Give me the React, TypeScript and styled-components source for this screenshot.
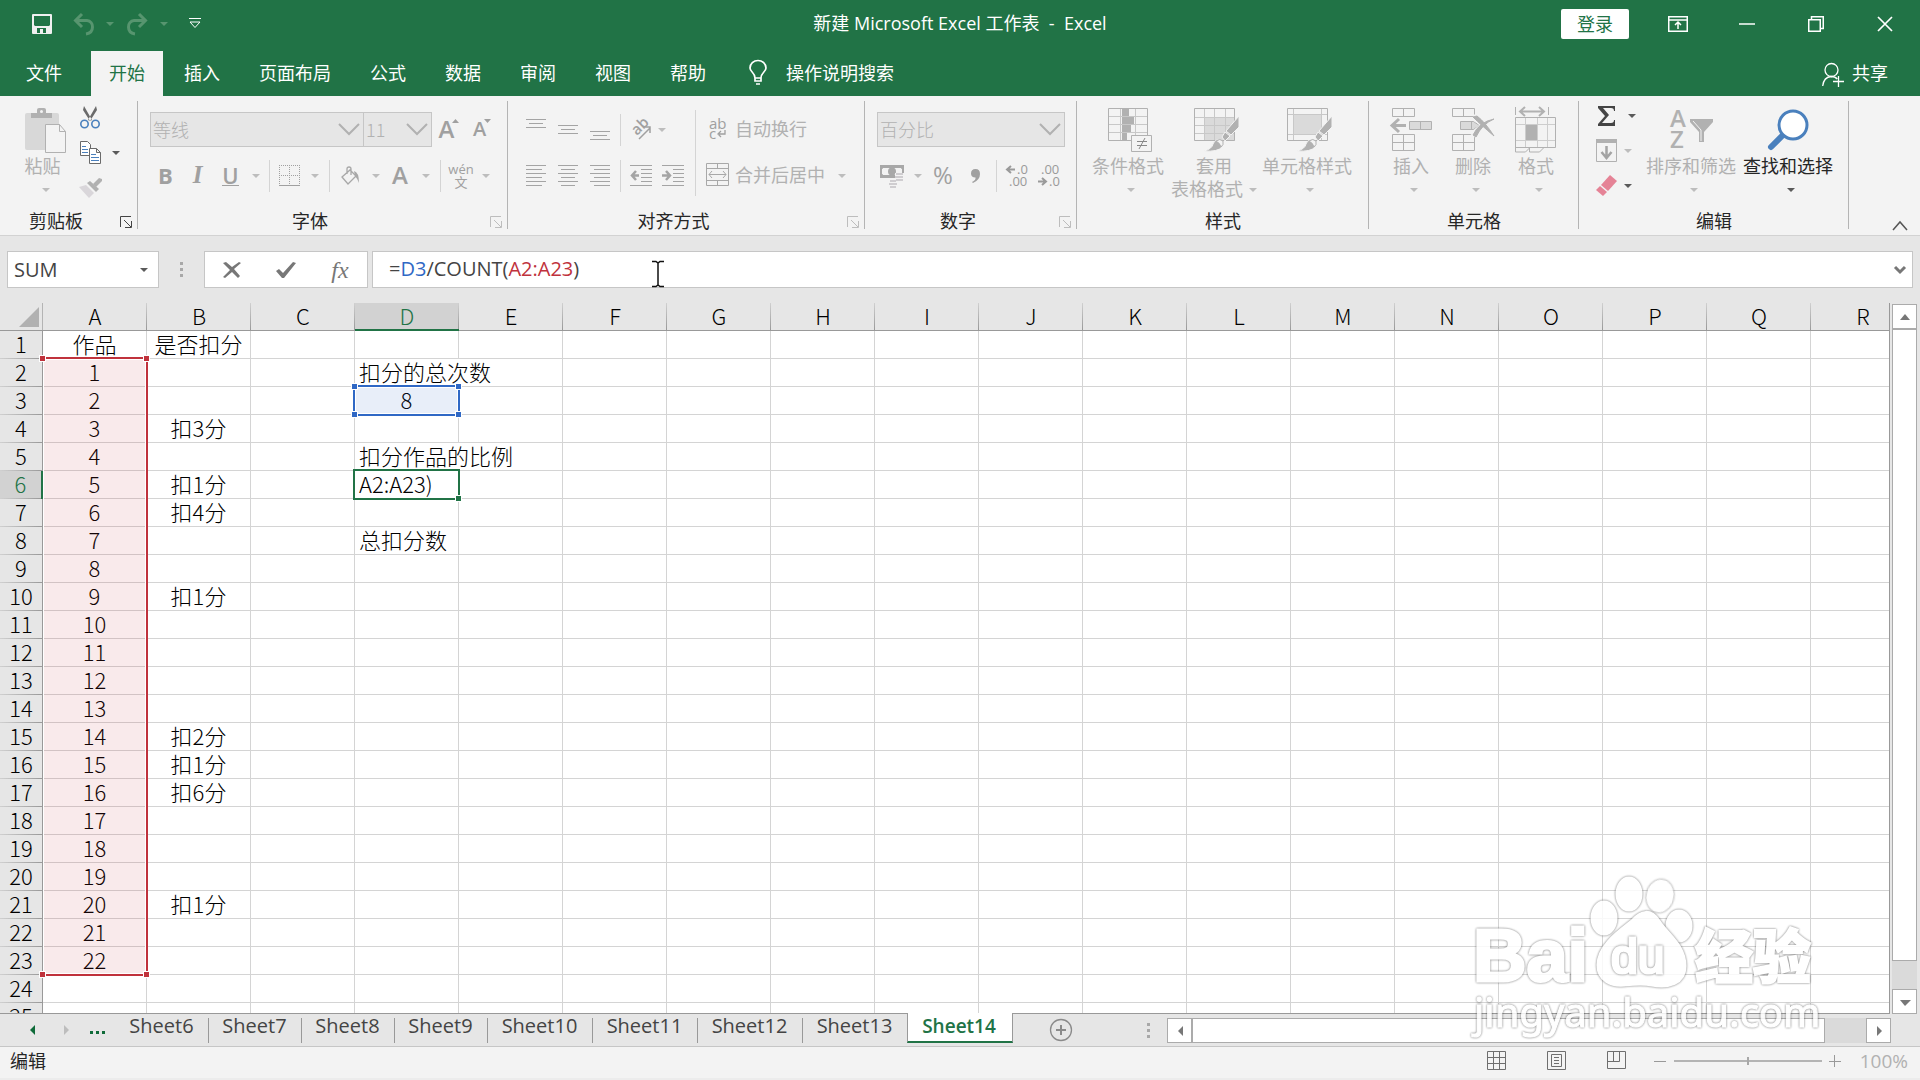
import React from "react";
import styled, { createGlobalStyle, css } from "styled-components";

const GREEN = "#217346";
const OFF = "#b1b1b1";
const UI = `"Open Sans", "Noto Sans CJK SC", sans-serif`;
const SHEET = `"Noto Sans CJK SC", sans-serif`;

const Global = createGlobalStyle`
  *, *::before, *::after { box-sizing: border-box; }
  body { margin: 0; }
  button, input, select {
    font: inherit; color: inherit; margin: 0; padding: 0;
    border: 0; background: none; border-radius: 0;
  }
  svg { display: block; flex: none; overflow: visible; }
`;

const Page = styled.div`
  display: flex;
  flex-direction: column;
  height: 100vh;
  overflow: hidden;
  background: #e6e6e6;
  color: #262626;
  font-family: ${UI};
  font-size: 18px;
  line-height: 24px;
  position: relative;
`;

/* ---------- title bar and tabs ---------- */

const TitleBar = styled.header`
  display: grid;
  grid-template-columns: 1fr auto 1fr;
  align-items: center;
  height: 51px;
  padding-bottom: 4px;
  background: ${GREEN};
  color: #fff;
`;
const QuickAccess = styled.div`
  display: flex;
  align-items: center;
  padding-left: 22px;
`;
const Title = styled.h1`
  margin: 0;
  padding-bottom: 2px;
  font-size: 18px;
  font-weight: 400;
  white-space: pre;
`;
const WindowControls = styled.div`
  display: flex;
  align-items: center;
  justify-content: flex-end;
  padding-right: 1px;
`;
const SignIn = styled.button`
  width: 68px;
  height: 30px;
  margin-right: 14px;
  border-radius: 2px;
  background: #fff;
  color: ${GREEN};
`;
const Slot = styled.button<{ $w: number; $color?: string }>`
  display: flex;
  align-items: center;
  justify-content: center;
  flex: none;
  width: ${(p) => p.$w}px;
  height: 32px;
  color: ${(p) => p.$color ?? "inherit"};
`;
const TabBar = styled.nav`
  display: flex;
  align-items: stretch;
  gap: 3px;
  height: 45px;
  padding: 0 26px 0 8px;
  background: ${GREEN};
  color: #fff;
`;
const Tab = styled.button<{ $active?: boolean; $file?: boolean }>`
  padding: 0 18px 2px;
  white-space: nowrap;
  ${(p) => p.$file && css`margin-right: 8px;`}
  ${(p) => p.$active && css`background: #f3f3f3; color: ${GREEN};`}
`;
const TellMe = styled.button`
  display: flex;
  align-items: center;
  gap: 18px;
  margin-left: 21px;
  padding-bottom: 2px;
`;
const Share = styled(TellMe)`
  gap: 8px;
  margin-left: auto;
  margin-right: 6px;
`;

/* ---------- ribbon ---------- */

const RibbonBar = styled.section`
  display: flex;
  flex: none;
  height: 140px;
  border-bottom: 1px solid #d2d2d2;
  background: #f3f3f3;
`;
const GroupBox = styled.div<{ $w: number }>`
  display: flex;
  flex-direction: column;
  flex: none;
  width: ${(p) => p.$w}px;
  background: linear-gradient(#b4b4b4, #b4b4b4) right 0 top 5px / 1px 128px no-repeat;
`;
const GroupBody = styled.div<{ $pad: number }>`
  display: flex;
  height: 104px;
  padding-left: ${(p) => p.$pad}px;
  color: ${OFF};
`;
const GroupFoot = styled.div`
  display: flex;
  align-items: center;
  height: 35px;
  padding-top: 9px;
`;
const GroupName = styled.span`
  flex: 1;
  padding-bottom: 2px;
  text-align: center;
`;
const Launcher = styled.button<{ $on?: boolean }>`
  width: 26px;
  padding: 0 0 0 8px;
  color: ${(p) => (p.$on ? "#444" : "#bdbdbd")};
`;
const Rows = styled.div`
  display: flex;
  flex-direction: column;
  gap: 11px;
  padding-top: 16px;
`;
const Row = styled.div`
  display: flex;
  align-items: center;
  height: 35px;
`;
const Rule = styled.i<{ $w: number; $tall?: boolean }>`
  flex: none;
  width: ${(p) => p.$w}px;
  height: ${(p) => (p.$tall ? 86 : 32)}px;
  ${(p) => p.$tall && css`margin-top: 14px;`}
  background: linear-gradient(#d4d4d4, #d4d4d4) center / 1px 100% no-repeat;
`;
const Combo = styled.label<{ $w: number }>`
  position: relative;
  display: flex;
  align-items: center;
  width: ${(p) => p.$w}px;
  height: 35px;
  border: 1px solid #c6c6c6;
  background: #e6e6e6;
  & + & { margin-left: -1px; }
  select { appearance: none; width: 100%; height: 33px; padding: 0 0 2px 2px; font-family: ${SHEET}; font-weight: 300; }
  svg { position: absolute; right: 3px; pointer-events: none; }
`;
const Big = styled.button<{ $w: number; $on?: boolean }>`
  display: flex;
  flex-direction: column;
  align-items: center;
  flex: none;
  width: ${(p) => p.$w}px;
  padding-top: 8px;
  line-height: 23px;
  white-space: nowrap;
  color: ${(p) => (p.$on ? "#262626" : OFF)};
`;
const BigIcon = styled.span`
  display: flex;
  align-items: center;
  flex: none;
  height: 51px;
`;
const BigLine = styled.span<{ $pad?: number }>`
  display: flex;
  align-items: center;
  flex: none;
  gap: 6px;
  height: 23px;
  padding-left: ${(p) => p.$pad ?? 0}px;
`;
const SmallStack = styled.div<{ $w: number; $top: number }>`
  display: flex;
  flex-direction: column;
  width: ${(p) => p.$w}px;
  padding-top: ${(p) => p.$top}px;
`;
const Small = styled.button<{ $on?: boolean; $gap?: number }>`
  display: flex;
  align-items: center;
  flex: none;
  gap: ${(p) => p.$gap ?? 7}px;
  height: 35px;
  padding-left: 7px;
  color: ${(p) => (p.$on ? "#5a5a5a" : "#bdbdbd")};
`;
const TextTool = styled.button`
  display: flex;
  align-items: center;
  gap: 5px;
  padding: 0 0 2px 4px;
  white-space: nowrap;
`;
const Glyph = styled.span<{ $size?: number; $kind?: "b" | "i" | "u" | "plain" }>`
  padding-bottom: 2px;
  color: #a0a0a0;
  font-size: ${(p) => p.$size ?? 22}px;
  font-weight: 600;
  ${(p) => p.$kind === "b" && css`font-weight: 700;`}
  ${(p) => p.$kind === "i" && css`font-family: "Liberation Serif", serif; font-style: italic; font-weight: 700;`}
  ${(p) => p.$kind === "u" && css`padding: 0; border-bottom: 1px solid #a0a0a0; line-height: 19px;`}
  ${(p) => p.$kind === "plain" && css`font-weight: 400;`}
`;
const SizeMark = styled.svg`
  align-self: flex-start;
  margin: 5px 0 0 -2px;
`;
const Collapse = styled.button`
  align-self: flex-end;
  margin: 0 12px 4px auto;
`;

/* ---------- formula bar ---------- */

const FormulaBar = styled.section`
  display: flex;
  align-items: flex-start;
  flex: none;
  height: 67px;
  padding: 15px 7px 0;
  color: #444;
  font-size: 20px;
`;
const Field = styled.div`
  display: flex;
  align-items: center;
  height: 37px;
  border: 1px solid #c6c6c6;
  background: #fff;
`;
const NameBox = styled(Field)`
  width: 152px;
  padding: 0 10px 0 6px;
  input { flex: 1; min-width: 0; outline: 0; }
`;
const Grip = styled.i<{ $w: number }>`
  width: ${(p) => p.$w}px;
  height: 15px;
  align-self: center;
  background: radial-gradient(#a8a8a8, #a8a8a8) center / 3px 100% no-repeat;
  mask: repeating-linear-gradient(#000 0 3px, transparent 3px 6px);
`;
const NameGrip = styled(Grip)`
  align-self: flex-start;
  margin-top: 11px;
`;
const FormulaField = styled(Field)`
  flex: 1;
  min-width: 0;
  margin-left: 4px;
  padding: 0 6px 2px 16px;
`;
const FormulaText = styled.div`
  flex: 1;
  outline: 0;
`;
const Ref = styled.span<{ $c: string }>`
  color: ${(p) => p.$c};
`;

/* ---------- sheet ---------- */

const Work = styled.main`
  display: flex;
  flex: 1;
  min-height: 0;
`;
const SheetView = styled.div`
  flex: 1;
  min-width: 0;
  overflow: hidden;
  border-right: 1px solid #999;
  border-bottom: 1px solid #999;
  background: linear-gradient(#e6e6e6 28px, #fff 28px);
`;
const Table = styled.table`
  width: 1915px;
  border-collapse: separate;
  border-spacing: 0;
  table-layout: fixed;
  color: #000;
  font-family: ${SHEET};
  font-size: 22px;
  font-weight: 300;
  line-height: 24px;
  th, td { height: 28px; padding: 0; font-weight: 300; vertical-align: top; white-space: nowrap; }
`;
const Corner = styled.th`
  border-bottom: 1px solid #999;
  background: linear-gradient(#b4b4b4, #b4b4b4) right / 1px 100% no-repeat, #e6e6e6;
  svg { margin: 4px 0 0 19px; }
`;
const ColHead = styled.th<{ $on: boolean }>`
  border-bottom: ${(p) => (p.$on ? `2px solid ${GREEN}` : "1px solid #999")};
  background: linear-gradient(#d0d0d0, #999) right / 1px 100% no-repeat, ${(p) => (p.$on ? "#d2d2d2" : "#e6e6e6")};
  color: ${(p) => (p.$on ? GREEN : "#000")};
`;
const RowHead = styled.th<{ $on: boolean }>`
  border-right: ${(p) => (p.$on ? `2px solid ${GREEN}` : "1px solid #999")};
  background: linear-gradient(90deg, #d0d0d0, #999) bottom / 100% 1px no-repeat, ${(p) => (p.$on ? "#d2d2d2" : "#e6e6e6")};
  color: ${(p) => (p.$on ? GREEN : "#000")};
`;
const Cell = styled.td<{ $left?: boolean; $spill?: boolean }>`
  position: relative;
  border-right: 1px solid ${(p) => (p.$spill ? "transparent" : "#d4d4d4")};
  border-bottom: 1px solid #d4d4d4;
  text-align: ${(p) => (p.$left ? "left" : "center")};
  && { padding-left: ${(p) => (p.$left ? 4 : 0)}px; }
`;
const RangeBox = styled.i<{ $c: string; $rows: number; $fill: string; $open?: boolean; $solid?: boolean }>`
  position: absolute;
  z-index: 1;
  top: -2px;
  left: -2px;
  width: 107px;
  height: ${(p) => p.$rows * 28 + 3}px;
  border: 2px solid ${(p) => p.$c};
  background: ${(p) => p.$fill};
  pointer-events: none;
  ${(p) => !p.$solid && css`box-shadow: inset 0 0 0 1px #fff;`}
  ${(p) => p.$open && css`left: 0; width: 105px; border-left: 0;`}
`;
const Knob = styled.b<{ $c: string; $v: "top" | "bottom"; $h: "left" | "right" }>`
  position: absolute;
  ${(p) => p.$v}: -4px;
  ${(p) => p.$h}: -4px;
  width: 7px;
  height: 7px;
  border: 1px solid #fff;
  background: ${(p) => p.$c};
`;

const VScroll = styled.div`
  display: flex;
  flex-direction: column;
  flex: none;
  width: 25px;
  margin: 1px 3px 0 2px;
  background: #dadada;
`;
const ScrollButton = styled.button`
  display: flex;
  align-items: center;
  justify-content: center;
  flex: none;
  width: 25px;
  height: 25px;
  border: 1px solid #ababab;
  background: #fff;
  color: #777;
`;
const Thumb = styled.div<{ $grow: number }>`
  flex: ${(p) => p.$grow} 1 0;
  border: 1px solid #ababab;
  background: #fff;
`;
const Track = styled.div<{ $grow: number }>`
  flex: ${(p) => p.$grow} 1 0;
`;

/* ---------- sheet tabs and status bar ---------- */

const SheetBar = styled.nav`
  display: flex;
  flex: none;
  height: 33px;
  border-bottom: 1px solid #c6c6c6;
  padding-right: 29px;
`;
const SheetNav = styled.div`
  display: flex;
  align-items: center;
  width: 116px;
  padding-left: 16px;
  color: #0f6b39;
`;
const SheetTab = styled.button<{ $w: number; $active?: boolean }>`
  flex: none;
  width: ${(p) => p.$w}px;
  height: 29px;
  padding: 0 2px 5px 0;
  color: #444;
  font-size: 20px;
  background: linear-gradient(#999, #999) right 0 top 4px / 1px 25px no-repeat;
  ${(p) =>
    p.$active &&
    css`
      margin-left: -1px;
      margin-top: -1px;
      padding-bottom: 2px;
      height: 30px;
      border: solid #999;
      border-width: 0 1px;
      border-bottom: 2px solid ${GREEN};
      background: #fff;
      color: ${GREEN};
      font-weight: 600;
      font-size: 19px;
    `}
`;
const AddSheet = styled.button`
  margin-left: 36px;
`;
const HScroll = styled.div`
  display: flex;
  flex: 1;
  height: 25px;
  margin-top: 4px;
  background: #dadada;
`;
const Spacer = styled.div`
  width: 56px;
`;
const Status = styled.footer`
  display: flex;
  align-items: center;
  flex: none;
  height: 33px;
  padding: 0 12px 4px 10px;
  border-bottom: 2px solid #ececec;
  background: #f3f3f3;
`;
const Views = styled.div`
  display: flex;
  margin-left: auto;
  color: #6e6e6e;
`;
const Zoom = styled.input`
  appearance: none;
  width: 148px;
  height: 10px;
  background: linear-gradient(#b4b4b4, #b4b4b4) center / 100% 2px no-repeat;
  &::-webkit-slider-thumb {
    appearance: none;
    width: 2px;
    height: 8px;
    background: #a8a8a8;
  }
`;
const Percent = styled.span`
  width: 60px;
  text-align: right;
  color: ${OFF};
  font-size: 19px;
`;
const Beam = styled.div`
  position: absolute;
  left: 650px;
  top: 260px;
`;
const Watermark = styled.div`
  position: absolute;
  right: 80px;
  bottom: 34px;
  pointer-events: none;
  opacity: 0.85;
  svg > * { filter: drop-shadow(0 0 1px rgba(0, 0, 0, 0.4)) drop-shadow(0 0 1px rgba(0, 0, 0, 0.25)); }
`;

/* ---------- drawings ---------- */

const Arrow = ({ on }: { on?: boolean }) => (
  <svg width="8" height="4" viewBox="0 0 8 4"><path d="M0 0h8L4 4z" fill={on ? "#5a5a5a" : "#bdbdbd"} /></svg>
);
const Chevron = () => (
  <svg width="22" height="13" viewBox="0 0 22 13" fill="none" stroke={OFF} strokeWidth="2"><path d="M1 1l10 10L21 1" /></svg>
);
const Tri = ({ d }: { d: string }) => (
  <svg width="12" height="12" viewBox="0 0 12 12"><path d={d} fill="currentColor" /></svg>
);
const SaveIcon = () => (
  <svg width="20" height="20" viewBox="0 0 20 20"><path fillRule="evenodd" fill="#f0f0f0" d="M1 0h18a1 1 0 0 1 1 1v18a1 1 0 0 1-1 1H1a1 1 0 0 1-1-1V1a1 1 0 0 1 1-1zm1 2v9l1 1h14l1-1V2zM5 14v5h3v-4h3v4h3v-5z" /></svg>
);
const UndoIcon = ({ flip }: { flip?: boolean }) => (
  <svg width="22" height="22" viewBox="0 0 22 22" fill="none" stroke="#57956f" strokeWidth="3">
    <path transform={flip ? "matrix(-1 0 0 1 22 0)" : undefined} d="M9 1L2.500 7.500 9 14M2.500 7.500H14a6 6 0 0 1 5.500 6.500q0 6-6.500 7" />
  </svg>
);
const LauncherIcon = () => (
  <svg width="12" height="12" viewBox="0 0 12 12" fill="none" stroke="currentColor"><path d="M.5 11V.500H11M4 4l7 7M11.500 5v6.500H5" /></svg>
);
const PasteIcon = () => (
  <svg width="48" height="46" viewBox="-6 0 48 46">
    <rect x="0" y="6" width="34" height="37" rx="2" fill="#d8d8d8" />
    <path d="M6 6h6V3q0-2 2-2h5q2 0 2 2v3h6v5H6z" fill="#b1b1b1" /><circle cx="16.500" cy="4.500" r="1.500" fill="#f3f3f3" />
    <path d="M20.500 17.500h14l6 7v21h-20z" fill="#f3f3f3" stroke="#b1b1b1" /><path d="M34.500 17.500v7h6" fill="none" stroke="#b1b1b1" />
  </svg>
);
const CutIcon = () => (
  <svg width="20" height="23" viewBox="0 0 20 23" fill="none">
    <path d="M4 0l8 14-2 1L3 4zM16 0L8 14l2 1 7-11z" fill="#6a6a6a" />
    <circle cx="4.500" cy="18" r="3.700" stroke="#4a80bd" strokeWidth="1.600" /><circle cx="15.500" cy="18" r="3.700" stroke="#4a80bd" strokeWidth="1.600" />
  </svg>
);
const CopyIcon = () => (
  <svg width="21" height="23" viewBox="0 0 21 23" fill="#fff" stroke="#6a6a6a">
    <path d="M.500.500h7l3 3v11h-10z" /><path d="M2 5.500h4M2 8.500h6M2 11.500h6" stroke="#4a80bd" />
    <path d="M9.500 7.500h7l4 4v11h-11zM16.500 7.500v4h4" /><path d="M11 13.500h5M11 16.500h8M11 19.500h8" stroke="#4a80bd" />
  </svg>
);
const PainterIcon = () => (
  <svg width="21" height="20" viewBox="1 0 21 20">
    <path d="M0 9l7-2 8 8-5 5z" fill="#d9d6da" /><path d="M8 5l3-2 9 8-3 3z" fill="#b1b1b1" /><path d="M14 6l6-6 3 1v2l-6 6z" fill="#b1b1b1" />
  </svg>
);
const BordersIcon = () => (
  <svg width="21" height="22" viewBox="0 0 21 22" fill="none" stroke="#a0a0a0">
    <path strokeDasharray="1 1" d="M0 .500h21M.500 0v19M20.500 0v19M10.500 0v19M0 10.500h21" /><path d="M0 20.500h21" />
  </svg>
);
const BucketIcon = () => (
  <svg width="19" height="20" viewBox="0 0 19 20" fill="none" stroke="#a8a8a8" strokeWidth="1.300">
    <path d="M1 11l8-7 6 6-8 8zM6 8V3q0-2 2-2t2 2v6" /><path d="M13 5q5 1 5 12-2-5-4-7z" fill="#a8a8a8" stroke="none" />
  </svg>
);
const LinesIcon = ({ rows }: { rows: [number, number, number][] }) => (
  <svg width="22" height="22" viewBox="0 0 22 22" stroke="#a4a4a4">
    {rows.map(([x, y, w]) => <path key={y} d={`M${x} ${y}.500h${w}`} />)}
  </svg>
);
const IndentIcon = ({ out }: { out?: boolean }) => (
  <svg width="22" height="22" viewBox="0 0 22 22" stroke="#a4a4a4" fill="none">
    <path d="M0 .500h22M11 4.500h11M11 8.500h11M11 12.500h11M11 16.500h11M0 20.500h22" />
    <path strokeWidth="2.500" d={out ? "M9 10.500H2M6 6l-4 4.500L6 15" : "M0 10.500h7M4 6l4 4.500L4 15"} />
  </svg>
);
const MiniText = styled.span`
  display: grid;
  font-size: 13px;
  line-height: 13px;
  color: #a0a0a0;
  text-align: center;
`;
const WrapIcon = () => (
  <svg width="24" height="24" viewBox="0 0 24 24" fill="#a0a0a0" fontFamily="Open Sans" fontSize="15">
    <text x="3" y="12">ab</text><text x="3" y="22">c</text>
    <path d="M19 13v4h-6M15 14l-3 3 3 3" fill="none" stroke="#a0a0a0" strokeWidth="1.300" />
  </svg>
);
const AngleIcon = () => (
  <svg width="24" height="24" viewBox="0 0 24 24" fill="#a0a0a0" fontFamily="Open Sans" fontSize="15" fontWeight="600">
    <text transform="translate(8 18) rotate(-45)">ab</text>
    <path d="M10 21L21 10M15 9h6v6" fill="none" stroke="#a0a0a0" strokeWidth="1.500" />
  </svg>
);
const MergeIcon = () => (
  <svg width="24" height="24" viewBox="0 0 24 24" fill="none" stroke="#a8a8a8">
    <path d="M.500.500h22v22H.500zM.500 5.500h22M.500 17.500h22M11.500.500v5M11.500 17.500v5M3 11.500h17M6 8l-3 3.500L6 15M17 8l3 3.500L17 15" />
  </svg>
);
const MoneyIcon = () => (
  <svg width="24" height="24" viewBox="0 0 24 24">
    <path fillRule="evenodd" fill="#a8a8a8" d="M0 1h24v13H0zm3 3q0 1-1 1v5q1 0 1 1h18q0-1 1-1V5q-1 0-1-1z" /><circle cx="12" cy="7.500" r="4" fill="#a8a8a8" />
    <path d="M15 9h9v10h-6v5H8v-8h7z" fill="#f3f3f3" />
    <path d="M16 10h7M15 13h8M16 16h7M10 17h6M9 20h8M10 23h6" stroke="#cfcdd0" strokeWidth="2" />
  </svg>
);
const DecimalIcon = ({ less }: { less?: boolean }) => (
  <svg width="22" height="23" viewBox="0 0 22 23" fill="#9a9a9a" fontFamily="Open Sans" fontSize="13">
    {less ? <><text x="3" y="10">.00</text><text x="11" y="22">.0</text></> : <><text x="11" y="10">.0</text><text x="3" y="22">.00</text></>}
    <path d={less ? "M0 17.500h7M4 14l4 3.500L4 21" : "M9 5.500H2M5 2L1 5.500 5 9"} fill="none" stroke="#9a9a9a" strokeWidth="2" />
  </svg>
);
const CondIcon = () => (
  <svg width="48" height="44" viewBox="-4 0 48 44" fill="none" stroke="#b1b1b1">
    <path d="M14 1h7v8h-7zM14 9h12v8H14zM14 17h9v8h-9zM14 25h5v8h-5z" fill="#b1b1b1" stroke="none" />
    <path d="M1 8.500h38M1 16.500h38M1 24.500h38M12.500 1v32M27.500 1v32" stroke="#c8c8c8" /><path d="M.500.500h39v32H.500z" />
    <path d="M23.500 27.500h20v16h-20z" fill="#f3f3f3" /><path d="M29 33.500h10M29 37.500h10M37 30l-6 11" stroke="#888" />
  </svg>
);
const Brush = () => (
  <g>
    <path d="M45 8L32 23l5 4 8-8z" fill="#b1b1b1" stroke="#f3f3f3" /><path d="M31 24l5 4-5 5-3-4z" fill="#b1b1b1" stroke="#f3f3f3" />
    <path d="M10 43q8-2 9-7 2-5 7-4 5 3 2 7-4 5-18 4z" fill="#b1b1b1" stroke="#f3f3f3" /><path d="M22 33q4-3 7 0 1 4-2 6-1-4-5-6z" fill="#f3f3f3" stroke="#b1b1b1" />
  </g>
);
const TableStyleIcon = () => (
  <svg width="49" height="42" viewBox="-4 1 49 42" fill="none">
    <path d="M11 10h30v23H11z" fill="#dadada" /><path d="M1 9.500h40M1 17.500h40M1 25.500h40M10.500 1v32M20.500 1v32M31.500 1v32" stroke="#c8c8c8" />
    <path d="M.500.500h40v32H.500z" stroke="#b1b1b1" /><Brush />
  </svg>
);
const CellStyleIcon = () => (
  <svg width="49" height="44" viewBox="-4 0 49 44" fill="none">
    <path d="M7 7h28v19H7z" fill="#dadada" /><path d="M1 6.500h40M1 26.500h40M6.500 1v32M34.500 1v32" stroke="#c8c8c8" />
    <path d="M.500.500h40v32H.500z" stroke="#b1b1b1" /><Brush />
  </svg>
);
const InsertIcon = () => (
  <svg width="44" height="44" viewBox="0 0 44 44" fill="none" stroke="#b1b1b1">
    <path d="M3.500.500h22v8h-22zM14.500.500v8M3.500 26.500h22v16h-22zM14.500 26.500v16M3.500 34.500h22" />
    <path d="M20.500 13.500h22v8h-22zM31.500 13.500v8" fill="#dadada" /><path d="M17 17.500H3M10 11l-7 6.500L10 24" strokeWidth="3" />
  </svg>
);
const DeleteIcon = () => (
  <svg width="44" height="44" viewBox="0 0 44 44" fill="none" stroke="#b1b1b1">
    <path d="M1.500.500h22v8h-22zM12.500.500v8M1.500 26.500h22v16h-22zM12.500 26.500v16M1.500 34.500h22" />
    <path d="M9.500 13.500h13l6 4-6 4h-13zM20.500 13.500v8" fill="#dadada" />
    <path d="M22 9q10 5 21 20M43 11Q30 17 22 28" strokeWidth="6" stroke="#f3f3f3" /><path d="M22 9l4-1q8 6 17 20-13-11-21-19zM43 11Q31 16 25 29l-3-2Q28 14 43 11z" fill="#b1b1b1" />
  </svg>
);
const FormatIcon = () => (
  <svg width="42" height="46" viewBox="0 0 42 46" fill="none" stroke="#b1b1b1">
    <path d="M.500 0v8M33.500 0v8" /><path d="M5 4.500h24M10 0L5 4.500 10 9M24 0l5 4.500L24 9" strokeWidth="2" />
    <path d="M10 18h12v15H10z" fill="#b1b1b1" stroke="none" /><path d="M1 17.500h40M1 33.500h40M10.500 11v29M22.500 11v29M32.500 11v29" stroke="#cdcdcd" />
    <path d="M.500 10.500h40v30H.500zM.500 40v5h10l4-4v4h10l4-4" />
  </svg>
);
const FillIcon = () => (
  <svg width="21" height="23" viewBox="0 0 21 23" fill="none" stroke="#b1b1b1">
    <path d="M.500.500h20v22H.500z" /><path d="M0 2h21" strokeWidth="4" /><path d="M10.500 7v10M5.500 13l5 6 5-6" stroke="#a4a4a4" strokeWidth="2.500" />
  </svg>
);
const SumIcon = () => (
  <svg width="20" height="20" viewBox="0 0 20 20"><path fill="#444" d="M2 0h17v5h-1q0-3-3-3H7l6 7-7 8h9q3 0 3-3h1v6H2v-2l7-8-7-8z" /></svg>
);
const EraserIcon = () => (
  <svg width="21" height="21" viewBox="0 0 21 21" fill="#e58396"><path d="M14 0l7 6-9 10-7-6z" /><path d="M4 11l7 6-4 4-7-6z" /></svg>
);
const SortIcon = () => (
  <svg width="44" height="44" viewBox="0 0 44 44" fill="#b1b1b1" fontFamily="Open Sans" fontSize="24" fontWeight="600">
    <text x="1" y="19">A</text><text x="1" y="40">Z</text><path d="M21 11h23v3l-9 10v10h-5V24l-9-10z" />
    <path d="M24 13l8 9v11" stroke="#f3f3f3" fill="none" />
  </svg>
);
const FindIcon = () => (
  <svg width="40" height="42" viewBox="0 0 40 42"><path d="M3 38l14-14" stroke="#4a80bd" strokeWidth="6" strokeLinecap="round" /><circle cx="25" cy="16" r="14" fill="#fff" stroke="#4a80bd" strokeWidth="3" /></svg>
);
const FxGlyph = styled.span`
  color: #777;
  font-family: "Liberation Serif", serif;
  font-size: 24px;
  font-style: italic;
`;

function Group({ name, w, pad, launcher, children }: { name: string; w: number; pad: number; launcher?: "on" | "off"; children: React.ReactNode }) {
  return (
    <GroupBox $w={w} role="group" aria-label={name}>
      <GroupBody $pad={pad}>{children}</GroupBody>
      <GroupFoot>
        <GroupName>{name}</GroupName>
        {launcher && <Launcher $on={launcher === "on"} aria-label={name + "设置"}><LauncherIcon /></Launcher>}
      </GroupFoot>
    </GroupBox>
  );
}

function BigTool({ w, on, icon, label, second }: { w: number; on?: boolean; icon: React.ReactNode; label: string; second?: string }) {
  return (
    <Big $w={w} $on={on}>
      <BigIcon>{icon}</BigIcon>
      <BigLine>{label}</BigLine>
      <BigLine $pad={second ? 0 : 6}>{second}<Arrow on={on} /></BigLine>
    </Big>
  );
}

const topRows: [number, number, number][][] = [
  [[1, 0, 20], [4, 4, 14], [1, 8, 20]],
  [[1, 6, 20], [4, 10, 14], [1, 14, 20]],
  [[1, 12, 20], [4, 16, 14], [1, 20, 20]],
];
const paraRows: [number, number, number][][] = [
  [[1, 0, 20], [1, 4, 16], [1, 8, 20], [1, 12, 16], [1, 16, 20], [1, 20, 16]],
  [[1, 0, 20], [4, 4, 14], [1, 8, 20], [4, 12, 14], [1, 16, 20], [4, 20, 14]],
  [[1, 0, 20], [5, 4, 16], [1, 8, 20], [5, 12, 16], [1, 16, 20], [5, 20, 16]],
];

function Ribbon() {
  return (
    <RibbonBar>
      <Group name="剪贴板" w={138} pad={12} launcher="on">
        <BigTool w={61} icon={<PasteIcon />} label="粘贴" />
        <SmallStack $w={58} $top={4}>
          <Small $on aria-label="剪切"><CutIcon /></Small>
          <Small $on $gap={11} aria-label="复制"><CopyIcon /><Arrow on /></Small>
          <Small aria-label="格式刷"><PainterIcon /></Small>
        </SmallStack>
      </Group>

      <Group name="字体" w={370} pad={12} launcher="off">
        <Rows>
          <Row>
            <Combo $w={214}><select aria-label="字体"><option>等线</option></select><Chevron /></Combo>
            <Combo $w={69}><select aria-label="字号"><option>11</option></select><Chevron /></Combo>
            <Slot $w={34} aria-label="增大字号"><Glyph $size={24}>A</Glyph><SizeMark width="7" height="4"><path d="M0 4l3.500-4L7 4z" fill="#a0a0a0" /></SizeMark></Slot>
            <Slot $w={32} aria-label="减小字号"><Glyph $size={20}>A</Glyph><SizeMark width="7" height="4"><path d="M0 0h7L3.500 4z" fill="#a0a0a0" /></SizeMark></Slot>
          </Row>
          <Row>
            <Slot $w={31} aria-label="加粗"><Glyph $kind="b">B</Glyph></Slot>
            <Slot $w={33} aria-label="倾斜"><Glyph $kind="i" $size={25}>I</Glyph></Slot>
            <Slot $w={33} aria-label="下划线"><Glyph $kind="u">U</Glyph></Slot>
            <Slot $w={18} aria-label="下划线选项"><Arrow /></Slot>
            <Rule $w={9} />
            <Slot $w={30} aria-label="边框"><BordersIcon /></Slot>
            <Slot $w={22} aria-label="边框选项"><Arrow /></Slot>
            <Rule $w={7} />
            <Slot $w={34} aria-label="填充颜色"><BucketIcon /></Slot>
            <Slot $w={17} aria-label="填充颜色选项"><Arrow /></Slot>
            <Slot $w={32} aria-label="字体颜色"><Glyph $size={24}>A</Glyph></Slot>
            <Slot $w={20} aria-label="字体颜色选项"><Arrow /></Slot>
            <Rule $w={8} />
            <Slot $w={34} aria-label="拼音"><MiniText><span>wén</span><span>文</span></MiniText></Slot>
            <Slot $w={16} aria-label="拼音选项"><Arrow /></Slot>
          </Row>
        </Rows>
      </Group>

      <Group name="对齐方式" w={357} pad={12} launcher="off">
        <Rows>
          <Row>
            {topRows.map((r, i) => <Slot key={i} $w={32} aria-label={["顶端对齐", "垂直居中", "底端对齐"][i]}><LinesIcon rows={r} /></Slot>)}
            <Rule $w={9} />
            <Slot $w={32} aria-label="方向"><AngleIcon /></Slot>
            <Slot $w={10} aria-label="方向选项"><Arrow /></Slot>
          </Row>
          <Row>
            {paraRows.map((r, i) => <Slot key={i} $w={32} aria-label={["左对齐", "居中", "右对齐"][i]}><LinesIcon rows={r} /></Slot>)}
            <Rule $w={9} />
            <Slot $w={32} aria-label="减少缩进量"><IndentIcon out /></Slot>
            <Slot $w={32} aria-label="增加缩进量"><IndentIcon /></Slot>
          </Row>
        </Rows>
        <Rule $w={13} $tall />
        <Rows>
          <Row><TextTool><WrapIcon />自动换行</TextTool></Row>
          <Row><TextTool><MergeIcon />合并后居中</TextTool><Slot $w={34} aria-label="合并选项"><Arrow /></Slot></Row>
        </Rows>
      </Group>

      <Group name="数字" w={212} pad={12} launcher="off">
        <Rows>
          <Row><Combo $w={188}><select aria-label="数字格式"><option>百分比</option></select><Chevron /></Combo></Row>
          <Row>
            <Slot $w={30} aria-label="会计格式"><MoneyIcon /></Slot>
            <Slot $w={22} aria-label="会计格式选项"><Arrow /></Slot>
            <Slot $w={28} aria-label="百分比样式"><Glyph $size={24} $kind="plain">%</Glyph></Slot>
            <Slot $w={36} aria-label="千位分隔样式"><svg width="9" height="14" viewBox="0 0 9 14"><path d="M4.500 0Q9 0 9 5q0 6-7 9l-1-1q4-2 3.500-4.500Q0 8.500 0 4.500 0 0 4.500 0z" fill="#a0a0a0" /></svg></Slot>
            <Rule $w={6} />
            <Slot $w={36} aria-label="增加小数位数"><DecimalIcon /></Slot>
            <Slot $w={28} aria-label="减少小数位数"><DecimalIcon less /></Slot>
          </Row>
        </Rows>
      </Group>

      <Group name="样式" w={292} pad={8}>
        <BigTool w={86} icon={<CondIcon />} label="条件格式" />
        <BigTool w={86} icon={<TableStyleIcon />} label="套用" second="表格格式" />
        <BigTool w={100} icon={<CellStyleIcon />} label="单元格样式" />
      </Group>

      <Group name="单元格" w={210} pad={11}>
        <BigTool w={62} icon={<InsertIcon />} label="插入" />
        <BigTool w={62} icon={<DeleteIcon />} label="删除" />
        <BigTool w={64} icon={<FormatIcon />} label="格式" />
      </Group>

      <Group name="编辑" w={270} pad={10}>
        <SmallStack $w={56} $top={2}>
          <Small $on $gap={12} aria-label="求和"><SumIcon /><Arrow on /></Small>
          <Small aria-label="填充"><FillIcon /><Arrow /></Small>
          <Small $on aria-label="清除"><EraserIcon /><Arrow on /></Small>
        </SmallStack>
        <BigTool w={92} icon={<SortIcon />} label="排序和筛选" />
        <BigTool w={102} on icon={<FindIcon />} label="查找和选择" />
      </Group>
      <Collapse aria-label="折叠功能区"><svg width="16" height="10" viewBox="0 0 16 10" fill="none" stroke="#555" strokeWidth="1.500"><path d="M1 9l7-8 7 8" /></svg></Collapse>
    </RibbonBar>
  );
}

const columns = "ABCDEFGHIJKLMNOPQR".split("");
const deductions: Record<number, string> = { 1: "是否扣分", 4: "扣3分", 6: "扣1分", 7: "扣4分", 10: "扣1分", 15: "扣2分", 16: "扣1分", 17: "扣6分", 21: "扣1分" };
const notes: Record<number, string> = { 2: "扣分的总次数", 3: "8", 5: "扣分作品的比例", 6: "A2:A23)", 8: "总扣分数" };

function cellText(col: string, row: number) {
  if (col === "A") return row === 1 ? "作品" : row <= 23 ? String(row - 1) : "";
  if (col === "B") return deductions[row] ?? "";
  if (col === "D") return notes[row] ?? "";
  return "";
}

function Sheet() {
  return (
    <SheetView>
      <Table>
        <colgroup><col style={{ width: 43 }} />{columns.map((c) => <col key={c} />)}</colgroup>
        <thead>
          <tr>
            <Corner aria-label="全选"><svg width="20" height="20" viewBox="0 0 20 20"><path d="M20 0v20H0z" fill="#b1b1b1" /></svg></Corner>
            {columns.map((c) => <ColHead key={c} $on={c === "D"} scope="col">{c}</ColHead>)}
          </tr>
        </thead>
        <tbody>
          {Array.from({ length: 25 }, (_, i) => i + 1).map((r) => (
            <tr key={r}>
              <RowHead $on={r === 6} scope="row">{r}</RowHead>
              {columns.map((c) => (
                <Cell key={c} $left={c === "D" && r !== 3} $spill={c === "D" && (r === 2 || r === 5)}>
                  {c === "A" && r === 2 && (
                    <RangeBox $c="#c0323c" $rows={22} $fill="rgba(192,50,60,.1)" $open>
                      <Knob $c="#c0323c" $v="top" $h="left" /><Knob $c="#c0323c" $v="top" $h="right" />
                      <Knob $c="#c0323c" $v="bottom" $h="left" /><Knob $c="#c0323c" $v="bottom" $h="right" />
                    </RangeBox>
                  )}
                  {c === "D" && r === 3 && (
                    <RangeBox $c="#2f68c5" $rows={1} $fill="rgba(47,104,197,.11)">
                      <Knob $c="#2f68c5" $v="top" $h="left" /><Knob $c="#2f68c5" $v="top" $h="right" />
                      <Knob $c="#2f68c5" $v="bottom" $h="left" /><Knob $c="#2f68c5" $v="bottom" $h="right" />
                    </RangeBox>
                  )}
                  {c === "D" && r === 6 && <RangeBox $c={GREEN} $rows={1} $fill="transparent" $solid><Knob $c={GREEN} $v="bottom" $h="right" /></RangeBox>}
                  {cellText(c, r)}
                </Cell>
              ))}
            </tr>
          ))}
        </tbody>
      </Table>
    </SheetView>
  );
}

const up = "M1 9l5-6 5 6z", down = "M1 4h11L6 10z", left = "M9 1v10L4 6z", right = "M4 1v10l5-5z";
const paw = "M44 57C30 68 10 82 10 101c0 16 14 21 26 20 10-1 18-2 28 0 16 3 33-1 33-19 0-21-17-31-26-45C63 45 53 46 44 57z";

export default function App() {
  return (
    <Page>
      <Global />
      <TitleBar>
        <QuickAccess>
          <Slot $w={40} aria-label="保存"><SaveIcon /></Slot>
          <Slot $w={44} aria-label="撤消"><UndoIcon /></Slot>
          <Slot $w={8} aria-label="撤消选项"><svg width="8" height="4"><path d="M0 0h8L4 4z" fill="#57956f" /></svg></Slot>
          <Slot $w={46} aria-label="恢复"><UndoIcon flip /></Slot>
          <Slot $w={8} aria-label="恢复选项"><svg width="8" height="4"><path d="M0 0h8L4 4z" fill="#57956f" /></svg></Slot>
          <Slot $w={54} aria-label="自定义快速访问工具栏"><svg width="12" height="11" viewBox="0 0 12 11" fill="none" stroke="#fff"><path d="M0 .500h12M1 4l5 5.500L11 4z" /></svg></Slot>
        </QuickAccess>
        <Title>{"新建 Microsoft Excel 工作表  -  Excel"}</Title>
        <WindowControls>
          <SignIn>登录</SignIn>
          <Slot $w={69} aria-label="功能区显示选项"><svg width="20" height="16" viewBox="0 0 20 16" fill="none" stroke="#fff"><path strokeWidth="1.500" d="M.750.750h18.500v14.500H.750zM1 4h18M10 13V6M7 9l3-3 3 3" /></svg></Slot>
          <Slot $w={69} aria-label="最小化"><svg width="16" height="2"><path d="M0 1h16" stroke="#fff" strokeWidth="1.500" /></svg></Slot>
          <Slot $w={69} aria-label="还原"><svg width="16" height="16" viewBox="0 0 16 16" fill="none" stroke="#fff" strokeWidth="1.500"><path d="M.750 3.750h11.500v11.500H.750zM3.500 3V.750h11.750V12.500H13" /></svg></Slot>
          <Slot $w={69} aria-label="关闭"><svg width="16" height="16" viewBox="0 0 16 16" stroke="#fff" strokeWidth="1.700"><path d="M1 1l14 14M15 1L1 15" /></svg></Slot>
        </WindowControls>
      </TitleBar>
      <TabBar>
        <Tab $file>文件</Tab>
        <Tab $active>开始</Tab>
        {["插入", "页面布局", "公式", "数据", "审阅", "视图", "帮助"].map((t) => <Tab key={t}>{t}</Tab>)}
        <TellMe>
          <svg width="20" height="26" viewBox="0 0 20 26" fill="none" stroke="#fff" strokeWidth="1.700"><path d="M7 18q0-3-2.500-5.500Q2 10 2 8a8 7.500 0 0 1 16 0q0 2-2.500 4.500Q13 15 13 18v3H7zM7 18h6M8 24h4" /></svg>
          操作说明搜索
        </TellMe>
        <Share>
          <svg width="22" height="22" viewBox="0 1 22 22" fill="none" stroke="#fff" strokeWidth="1.300"><circle cx="9.500" cy="9" r="6.500" /><path d="M.700 25q1-9 8.500-9.500 4 0 6 2.500M16.500 15v11M11 20.500h11" /></svg>
          共享
        </Share>
      </TabBar>

      <Ribbon />

      <FormulaBar>
        <NameBox><input aria-label="名称框" defaultValue="SUM" /><Arrow on /></NameBox>
        <NameGrip $w={45} />
        <Field>
          <Slot $w={54} aria-label="取消"><svg width="18" height="16" viewBox="0 0 18 16"><path d="M0 1l3-1 6 5 7-5 2 1-7 6 6 7-2 2-6-6-7 6-2-1 7-7z" fill="#777" /></svg></Slot>
          <Slot $w={54} aria-label="输入"><svg width="20" height="16" viewBox="0 0 20 16"><path d="M0 9l3-2 4 4L17 0l3 1L8 16H6z" fill="#777" /></svg></Slot>
          <Slot $w={54} aria-label="插入函数"><FxGlyph>fx</FxGlyph></Slot>
        </Field>
        <FormulaField>
          <FormulaText role="textbox" aria-label="编辑栏" contentEditable suppressContentEditableWarning>
            =<Ref $c="#2f68c5">D3</Ref>/COUNT(<Ref $c="#c0323c">A2:A23</Ref>)
          </FormulaText>
          <svg width="12" height="8" viewBox="0 0 12 8" fill="none" stroke="#777" strokeWidth="3"><path d="M1 2l5 5 5-5" /></svg>
        </FormulaField>
      </FormulaBar>

      <Work>
        <Sheet />
        <VScroll>
          <ScrollButton aria-label="向上滚动"><Tri d={up} /></ScrollButton>
          <Thumb $grow={632} />
          <Track $grow={28} />
          <ScrollButton aria-label="向下滚动"><Tri d={down} /></ScrollButton>
        </VScroll>
      </Work>

      <SheetBar>
        <SheetNav>
          <Slot $w={32} aria-label="上一张"><Tri d={left} /></Slot>
          <Slot $w={36} $color="#bdbdbd" aria-label="下一张"><Tri d={right} /></Slot>
          <Slot $w={28} aria-label="更多工作表"><svg width="16" height="10"><path d="M0 6h3v3H0zM6 6h3v3H6zM12 6h3v3h-3z" fill="#0f6b39" /></svg></Slot>
        </SheetNav>
        {[6, 7, 8, 9, 10, 11, 12, 13].map((n) => <SheetTab key={n} $w={n < 10 ? 93 : 105}>Sheet{n}</SheetTab>)}
        <SheetTab $w={106} $active>Sheet14</SheetTab>
        <AddSheet aria-label="新工作表"><svg width="24" height="24" viewBox="0 0 24 24" fill="none" stroke="#8a8a8a"><circle cx="12" cy="12" r="10.500" strokeWidth="1.300" /><path d="M12 7v10M7 12h10" strokeWidth="2" /></svg></AddSheet>
        <Spacer />
        <Grip $w={38} />
        <HScroll>
          <ScrollButton aria-label="向左滚动"><Tri d={left} /></ScrollButton>
          <Thumb $grow={634} />
          <Track $grow={41} />
          <ScrollButton aria-label="向右滚动"><Tri d={right} /></ScrollButton>
        </HScroll>
      </SheetBar>

      <Status>
        编辑
        <Views>
          <Slot $w={60} aria-label="普通"><svg width="19" height="19" viewBox="0 0 19 19" fill="none" stroke="currentColor"><path d="M.500.500h18v18H.500zM6.500.500v18M12.500.500v18M.500 6.500h18M.500 12.500h18" /></svg></Slot>
          <Slot $w={60} aria-label="页面布局视图"><svg width="19" height="19" viewBox="0 0 19 19" fill="none" stroke="currentColor"><path d="M.500.500h18v18H.500zM4.500 3.500h10v12h-10zM7 6.500h5M7 9.500h5M7 12.500h5" /></svg></Slot>
          <Slot $w={60} aria-label="分页预览"><svg width="19" height="19" viewBox="0 0 19 19" fill="none" stroke="currentColor"><path d="M.500.500h18v17H.500zM.500 10.500h12M6.500.500v10M12.500.500v10" /></svg></Slot>
        </Views>
        <Slot $w={28} $color="#999" aria-label="缩小"><svg width="12" height="12"><path d="M0 6.500h12" stroke="currentColor" /></svg></Slot>
        <Zoom type="range" min={0} max={100} defaultValue={50} aria-label="缩放" />
        <Slot $w={26} $color="#999" aria-label="放大"><svg width="12" height="12"><path d="M0 6.500h12M5.500 0v12" stroke="currentColor" /></svg></Slot>
        <Percent>100%</Percent>
      </Status>

      <Beam>
        <svg width="16" height="28" viewBox="0 0 16 28" fill="none" stroke="#111" strokeWidth="1.500"><path d="M2 1.500h4l2 1.500 2-1.500h4M2 26.500h4l2-1.500 2 1.500h4M8 3v22" /></svg>
      </Beam>
      <Watermark>
        <svg width="370" height="176" viewBox="0 0 370 176" fill="#fff" stroke="#fff" strokeWidth="3">
          <text x="3" y="111" fontFamily="Liberation Sans" fontWeight="700" fontSize="74">Bai</text>
          <ellipse cx="134" cy="48" rx="12" ry="16" /><ellipse cx="159" cy="24" rx="12" ry="16" />
          <ellipse cx="190" cy="26" rx="12" ry="15" transform="rotate(12 190 26)" /><ellipse cx="209" cy="56" rx="12" ry="15" />
          <path transform="translate(118 -6)" d={paw} />
          <text x="141" y="103" fontFamily="Liberation Sans" fontSize="48">du</text>
          <text x="225" y="108" strokeWidth="2" fontFamily="Noto Sans CJK SC" fontWeight="900" fontSize="58">经验</text>
          <text x="4" y="157" strokeWidth="1" fontFamily="Noto Sans" fontSize="40">jingyan.baidu.com</text>
        </svg>
      </Watermark>
    </Page>
  );
}
